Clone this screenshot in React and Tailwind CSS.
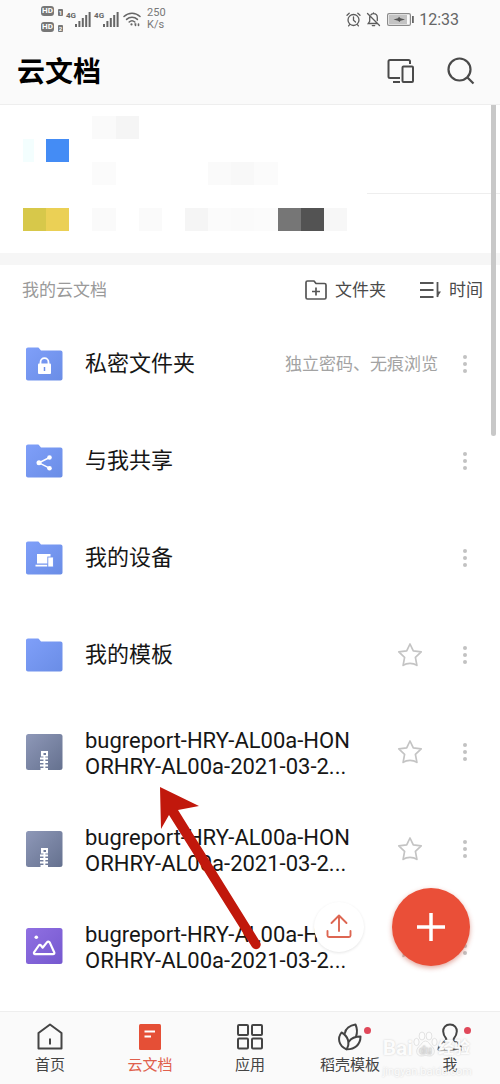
import React from "react";

const mosaic = [
  "col-start-4 row-start-1 bg-[#fafafa]",
  "col-start-5 row-start-1 bg-[#f5f5f5]",
  "col-start-1 row-start-2 bg-[#f3fefe] mr-3",
  "col-start-2 row-start-2 bg-[#448cf5]",
  "col-start-4 row-start-3 bg-[#fbfbfb]",
  "col-start-9 row-start-3 bg-[#fafafa]",
  "col-start-10 row-start-3 bg-[#f8f8f8]",
  "col-start-11 row-start-3 bg-[#fbfbfb]",
  "col-start-1 row-start-5 bg-[#d7c84a]",
  "col-start-2 row-start-5 bg-[#ebd055]",
  "col-start-4 row-start-5 bg-[#fafafa]",
  "col-start-6 row-start-5 bg-[#fafafa]",
  "col-start-8 row-start-5 bg-[#f5f5f5]",
  "col-start-9 row-start-5 bg-[#fbfbfb]",
  "col-start-10 row-start-5 bg-[#fafafa]",
  "col-start-11 row-start-5 bg-[#fbfbfb]",
  "col-start-12 row-start-5 bg-[#767676]",
  "col-start-13 row-start-5 bg-[#535353]",
  "col-start-14 row-start-5 bg-[#f7f7f7]",
];

function Signal() {
  return (
    <div className="flex items-start">
      <span className="text-[8px] leading-[10px] font-bold">4G</span>
      <svg width="16" height="16" viewBox="0 0 16 16" fill="#666" className="-ml-px">
        <rect x="0" y="13" width="2" height="3" />
        <rect x="3.4" y="10" width="2" height="6" />
        <rect x="6.8" y="7" width="2" height="9" />
        <rect x="10.2" y="4" width="2" height="12" />
        <rect x="13.6" y="1" width="2" height="15" />
      </svg>
    </div>
  );
}

function HdBadge({ sim }) {
  return (
    <div className="flex items-end gap-1">
      <span className="flex h-[10px] w-[13px] items-center justify-center rounded-[3px] bg-[#777] text-[8px] font-bold leading-none text-white">
        HD
      </span>
      <span className="flex h-[7px] w-[5px] items-center justify-center rounded-[1px] bg-[#777] text-[6px] font-bold leading-none text-white">
        {sim}
      </span>
    </div>
  );
}

function StatusBar() {
  return (
    <div className="flex h-[38px] items-center justify-between pl-[41px] pr-[41px] text-[#666]">
      <div className="flex items-center">
        <div className="flex w-[25px] flex-col gap-[6px]">
          <HdBadge sim="1" />
          <HdBadge sim="2" />
        </div>
        <div className="flex gap-[3px]">
          <Signal />
          <Signal />
        </div>
        <svg width="18" height="16" viewBox="0 0 18 16" fill="none" stroke="#666" strokeWidth="1.5" strokeLinecap="round" className="ml-1">
          <path d="M1 5.5C5.5 1 12.5 1 17 5.5M3.6 8.4c3-3 7.8-3 10.8 0M6.2 11c1.6-1.5 4-1.5 5.600 0" />
          <circle cx="8.500" cy="13.400" r="1.100" fill="#666" stroke="none" />
          <path d="M12 13h.5v1.500M15.500 13v1.500" strokeWidth="1.600" />
        </svg>
        <div className="ml-[6px] text-[11px] leading-3 text-[#777]">
          250
          <br />
          K/s
        </div>
      </div>
      <div className="flex items-center">
        <svg width="15" height="15" viewBox="0 0 15 15" fill="none" stroke="#5c5c5c" strokeWidth="1.300" strokeLinecap="round">
          <circle cx="7.500" cy="8" r="5.500" />
          <path d="M7.500 5v3.200l2 1.800M1 3.300 3.200 1.200M14 3.300l-2.200-2.100M3.600 12.700l-1 1.200M11.400 12.700l1 1.200" />
        </svg>
        <svg width="15" height="15" viewBox="0 0 15 15" fill="none" stroke="#5c5c5c" strokeWidth="1.300" strokeLinecap="round" className="ml-[5px]">
          <path d="M5 2.800C5.700 2 6.500 1.700 7.500 1.700c2.300 0 3.800 1.600 3.800 3.900v3M3.700 4.700v4.600L2.200 11.500h8.600M7.500 1.700V.8M6.300 13.600h2.400M1.500 1.500l12 12" />
        </svg>
        <svg width="27" height="13" viewBox="0 0 27 13" className="ml-[6px]">
          <rect x=".6" y=".6" width="22.800" height="11.800" rx="1.500" fill="#fafafa" stroke="#8a8a8a" strokeWidth="1.200" />
          <rect x="2" y="2" width="18" height="9" fill="#c3c3c3" />
          <path d="M6.500 6.500 11 5.300 12 3.800l1.500 1.500 4.500 1.200-4.500 1.200L12.500 9 11 7.700z" fill="#555" />
          <rect x="25" y="3" width="1.800" height="7" fill="#666" />
        </svg>
        <span className="ml-[5px] pt-px text-[16px] leading-5">12:33</span>
      </div>
    </div>
  );
}

function Folder({ id, children }) {
  return (
    <svg width="37" height="34" viewBox="0 0 37 34">
      <defs>
        <linearGradient id={id} x1="0" y1="0" x2="1" y2="1">
          <stop offset="0" stopColor="#7f9ff9" />
          <stop offset="1" stopColor="#6a8de6" />
        </linearGradient>
      </defs>
      <path
        d="M2 .5h9.500c1 0 1.500.400 2 1.200L15 3.500h19.500c1.200 0 2 .8 2 2v26c0 1.200-.8 2-2 2H2c-1.200 0-2-.8-2-2v-29c0-1.200.8-2 2-2z"
        fill={"url(#" + id + ")"}
      />
      {children}
    </svg>
  );
}

function ZipIcon({ id }) {
  return (
    <svg width="37" height="36" viewBox="0 0 37 36">
      <defs>
        <linearGradient id={id} x1="0" y1="0" x2="1" y2="1">
          <stop offset="0" stopColor="#8e98b8" />
          <stop offset="1" stopColor="#65718f" />
        </linearGradient>
      </defs>
      <rect width="36.500" height="36" rx="2.500" fill={"url(#" + id + ")"} />
      <path d="M15 17h7v5.500h-7z" fill="#fff" />
      <path d="M17.500 19h2.500v2h-2.500z" fill="#727d9b" />
      <path d="M18.400 22v14M14 24.500h8M14 28h8M14 31.500h8M14.500 35h7.500" stroke="#fff" strokeWidth="1.900" />
    </svg>
  );
}

function ImageIcon() {
  return (
    <svg width="37" height="36" viewBox="0 0 37 36">
      <defs>
        <linearGradient id="imageFill" x1="0" y1="0" x2="1" y2="1">
          <stop offset="0" stopColor="#9070e2" />
          <stop offset="1" stopColor="#7558cf" />
        </linearGradient>
      </defs>
      <rect width="36.500" height="36" rx="2.500" fill="url(#imageFill)" />
      <circle cx="10.300" cy="9.300" r="1.800" fill="#fff" />
      <path
        d="M8.200 24.200 12.800 17.500c.6-.9 1.600-.9 2.200 0l1.600 2.200 4.300-5.300c.9-1.100 2.200-1 2.900.2l4.400 9.600c.5 1.200-.1 2-1.200 2H9.200c-1.200 0-1.700-.9-1-2z"
        fill="none"
        stroke="#fff"
        strokeWidth="2.200"
        strokeLinejoin="round"
      />
    </svg>
  );
}

const rows = [
  {
    name: ["私密文件夹"],
    note: "独立密码、无痕浏览",
    icon: (
      <Folder id="lockFill">
        <path d="M14.500 17v-1.800a4 4 0 0 1 8 0V17" fill="none" stroke="#fff" strokeWidth="1.800" />
        <rect x="12" y="16.500" width="13" height="10.500" rx="1" fill="#fff" />
        <path d="M18.500 20v4" stroke="#6c8fe8" strokeWidth="1.500" />
      </Folder>
    ),
  },
  {
    name: ["与我共享"],
    icon: (
      <Folder id="shareFill">
        <path d="M23.500 13.500 13 18.800l10.500 5.400" fill="none" stroke="#fff" strokeWidth="1.500" />
        <circle cx="23.500" cy="13.500" r="2.300" fill="#fff" />
        <circle cx="13" cy="18.800" r="2.500" fill="#fff" />
        <circle cx="23.500" cy="24.200" r="2.300" fill="#fff" />
      </Folder>
    ),
  },
  {
    name: ["我的设备"],
    icon: (
      <Folder id="deviceFill">
        <path d="M11 13h13.500v9.500H11zM9.500 23.700h12v1.800h-12z" fill="#fff" />
        <rect x="21.800" y="16" width="5.600" height="10" fill="#fff" stroke="#7093ee" strokeWidth=".9" />
      </Folder>
    ),
  },
  { name: ["我的模板"], star: true, icon: <Folder id="plainFill" /> },
  { name: ["bugreport-HRY-AL00a-HON", "ORHRY-AL00a-2021-03-2..."], star: true, icon: <ZipIcon id="zipFillA" /> },
  { name: ["bugreport-HRY-AL00a-HON", "ORHRY-AL00a-2021-03-2..."], star: true, icon: <ZipIcon id="zipFillB" /> },
  { name: ["bugreport-HRY-AL00a-HON", "ORHRY-AL00a-2021-03-2..."], star: true, icon: <ImageIcon /> },
];

function Row({ row }) {
  return (
    <li className="flex h-[97px] items-center pl-[26px] pr-[25px]">
      {row.icon}
      <span
        className={
          row.name.length > 1
            ? "ml-[22px] flex-1 whitespace-nowrap pt-1 text-[22px] leading-[26px] text-[#161616]"
            : "ml-[22px] flex-1 whitespace-nowrap text-[22px] leading-[26px] text-[#161616]"
        }
      >
        {row.name.map((line) => (
          <span key={line} className="block">
            {line}
          </span>
        ))}
      </span>
      {row.note && <span className="mr-[17px] text-[17px] leading-6 text-[#a3a3a3]">{row.note}</span>}
      {row.star && (
        <button type="button" aria-label="收藏" className="mr-8">
          <svg width="26" height="26" viewBox="0 0 26 26" fill="none" stroke="#c4c4c4" strokeWidth="1.700" strokeLinejoin="round">
            <path d="m13 2 3.300 6.900 7.900 1-5.800 5.500 1.500 8C18 22 16 21.300 13 21.300S8 22 6.100 23.400l1.500-8L1.800 9.900l7.900-1z" />
          </svg>
        </button>
      )}
      <button type="button" aria-label="更多" className="flex w-5 justify-center">
        <svg width="6" height="20" viewBox="0 0 6 20" fill="#c2c2c2">
          <circle cx="3" cy="3" r="2" />
          <circle cx="3" cy="10" r="2" />
          <circle cx="3" cy="17" r="2" />
        </svg>
      </button>
    </li>
  );
}

const tabs = [
  {
    label: "首页",
    icon: (
      <g fill="none" stroke="#444" strokeWidth="2" strokeLinejoin="round">
        <path d="M2.500 25.500V10L14 1.500 25.500 10v15.500z" />
        <path d="M14 15.500v6" />
      </g>
    ),
  },
  {
    label: "云文档",
    active: true,
    icon: (
      <g>
        <rect x="3" y="1" width="22" height="26" rx="1.500" fill="#e54f36" />
        <path d="M8.500 8.500h10.500M8.500 13.500h6.500" stroke="#fff" strokeWidth="2" />
      </g>
    ),
  },
  {
    label: "应用",
    icon: (
      <g fill="none" stroke="#444" strokeWidth="2">
        <rect x="2" y="2" width="10" height="10" rx="1" />
        <rect x="16" y="2" width="10" height="10" rx="1" />
        <rect x="2" y="15.500" width="10" height="10" rx="1" />
        <rect x="16" y="15.500" width="10" height="10" rx="1" />
      </g>
    ),
  },
  {
    label: "稻壳模板",
    dot: true,
    icon: (
      <g fill="none" stroke="#444" strokeWidth="2" strokeLinejoin="round" strokeLinecap="round">
        <path d="M9 10C9.500 6 13.500 2.500 19.500 1.500c2 4.500 1.800 8.500.5 12" />
        <path d="M5.500 9.500C1.500 14.500 2 22.500 10.500 26.300 14.500 20 12 13 5.500 9.500z" />
        <path d="M13 18.500C15 15.500 19 13.500 24.500 13.500c0 8-5.500 13-14 12.800" />
      </g>
    ),
  },
  {
    label: "我",
    dot: true,
    icon: (
      <g fill="none" stroke="#444" strokeWidth="2" strokeLinejoin="round">
        <path d="M14 1.500c-4.500 0-7 3.200-6.800 7 .2 2.800 1 4.600 2.500 6.300.9 1.300.8 2.300-.4 3.300C7.800 19.500 2.700 20.500 2.500 26.500h23c-.2-6-5.300-7-6.800-8.400-1.200-1-1.300-2-.4-3.300 1.500-1.700 2.300-3.500 2.500-6.300.2-3.800-2.300-7-6.800-7z" />
      </g>
    ),
  },
];

function Watermark() {
  return (
    <div className="pointer-events-none absolute right-[28px] top-[18px] text-[#fcfcfc] [text-shadow:0_0_2px_#ccc]">
      <div className="flex items-center text-[21px] font-bold leading-8">
        Bai
        <svg width="25" height="28" viewBox="0 0 25 28" fill="#fcfcfc" fillOpacity=".85" stroke="#dcdcdc" strokeWidth=".8" className="mb-2">
          <ellipse cx="3.500" cy="12" rx="2.600" ry="3.600" />
          <ellipse cx="9" cy="6" rx="2.900" ry="4" />
          <ellipse cx="16" cy="6" rx="2.900" ry="4" />
          <ellipse cx="21.500" cy="12" rx="2.600" ry="3.600" />
          <path d="M12.500 11c3 0 3.500 3 6.500 5.500 4 3.500 2.500 9.500-2 9.500-2.500 0-3-.5-4.500-.5s-2 .5-4.500.5c-4.500 0-6-6-2-9.500 3-2.500 3.500-5.500 6.500-5.500z" />
          <text x="12.500" y="24" textAnchor="middle" fontSize="11" fill="#fcfcfc" stroke="#d4d4d4" strokeWidth=".5">du</text>
        </svg>
        <span className="text-[16px]">经验</span>
      </div>
      <div className="text-[11px] leading-3">jingyan.baidu.com</div>
    </div>
  );
}

export default function App() {
  return (
    <div className="flex min-h-screen flex-col bg-white font-['Roboto','Noto_Sans_CJK_SC',sans-serif]">
      <header className="border-b border-[#eeeeee] bg-[#fafafa]">
        <StatusBar />
        <div className="flex h-[66px] items-center pl-[17px] pr-[25px]">
          <h1 className="flex-1 pt-1 text-[28px] font-bold leading-10 text-black">云文档</h1>
          <button type="button" aria-label="设备">
            <svg width="28" height="26" viewBox="0 0 28 26" fill="none" stroke="#4a4a4a" strokeWidth="2" strokeLinejoin="round">
              <path d="M23 6V3.500C23 2.500 22.500 2 21.500 2H3C2 2 1.500 2.500 1.500 3.500v15c0 1 .5 1.500 1.500 1.500h10M6 24h7" />
              <rect x="15.500" y="8.500" width="10.500" height="15.500" rx="1" />
            </svg>
          </button>
          <button type="button" aria-label="搜索" className="ml-8">
            <svg width="28" height="28" viewBox="0 0 28 28" fill="none" stroke="#4a4a4a" strokeWidth="2.200">
              <circle cx="12.500" cy="12.500" r="11" />
              <path d="m20 20 6.500 6.500" />
            </svg>
          </button>
        </div>
      </header>

      <main className="relative flex-1">
        <div className="flex h-[148px] pl-[23px] pt-[11px]">
          <div className="grid w-[324px] grid-cols-14 grid-rows-[repeat(5,23px)]">
            {mosaic.map((cell) => (
              <div key={cell} className={cell} />
            ))}
          </div>
          <div className="ml-5 mt-[77px] flex-1 border-t border-[#eeeeee]" />
        </div>
        <div className="h-3 bg-[#f6f6f6]" />
        <div className="flex h-[50px] items-center pl-[22px] pr-[17px] text-[17px] leading-6 text-[#4a4a4a]">
          <h2 className="flex-1 text-[#9a9a9a]">我的云文档</h2>
          <button type="button" className="flex items-center gap-2">
            <svg width="22" height="20" viewBox="0 0 22 20" fill="none" stroke="#555" strokeWidth="1.700" strokeLinejoin="round">
              <path d="M1 2.500C1 1.500 1.500 1 2.500 1H9l2 2.500h8.500c1 0 1.500.5 1.500 1.500v12.500c0 1-.5 1.500-1.500 1.500h-17C1.500 19 1 18.500 1 17.500zM11 7.500v8M7 11.500h8" />
            </svg>
            文件夹
          </button>
          <button type="button" className="ml-[34px] flex items-center gap-2">
            <svg width="21" height="18" viewBox="0 0 21 18" fill="none" stroke="#555" strokeWidth="1.800">
              <path d="M0 2h13.500M0 9h13.500M0 16h13.500M17.500 1v15" />
              <path d="M17 10.500h4L17 16.500z" fill="#555" stroke="none" />
            </svg>
            时间
          </button>
        </div>
        <ul>
          {rows.map((row, i) => (
            <Row key={i} row={row} />
          ))}
        </ul>

        <div className="absolute right-1 top-0 h-[331px] w-[5px] rounded-b-full bg-[#c8c8c8]" />

        <div className="absolute bottom-[45px] right-[30px] flex items-center gap-7">
          <button type="button" aria-label="上传" className="flex size-[50px] items-center justify-center rounded-full bg-white shadow-[0_1px_3px_rgba(0,0,0,0.10)]">
            <svg width="26" height="26" viewBox="0 0 26 26" fill="none" stroke="#dd6652" strokeWidth="1.900" strokeLinecap="round" strokeLinejoin="round">
              <path d="M13 17V2M5.500 9 13 1.500 20.500 9M1.500 17v4.500c0 1 .5 1.500 1.500 1.500h20c1 0 1.500-.5 1.500-1.500V17" />
            </svg>
          </button>
          <button type="button" aria-label="新建" className="flex size-[78px] items-center justify-center rounded-full bg-[#ea4f38] shadow-[0_2px_5px_rgba(190,60,40,0.45)]">
            <svg width="28" height="28" viewBox="0 0 28 28" stroke="#fff" strokeWidth="3.500">
              <path d="M14 0v28M0 14h28" />
            </svg>
          </button>
        </div>

        <svg width="106" height="168" viewBox="0 0 106 168" className="pointer-events-none absolute left-[158px] top-[680px]">
          <path d="M2 2 41 21 20 25 102 157a4.500 4.500 0 0 1-8 5L11 30 3 44z" fill="#c1180c" />
        </svg>
      </main>

      <nav className="relative grid h-[73px] grid-cols-5 border-t border-[#eeeeee] bg-[#fafafa]">
        {tabs.map((tab) => (
          <a
            key={tab.label}
            href="#"
            className={
              tab.active
                ? "flex flex-col items-center gap-1 pt-[11px] text-[15px] leading-5 text-[#e0604c]"
                : "flex flex-col items-center gap-1 pt-[11px] text-[15px] leading-5 text-[#444444]"
            }
          >
            <span className="relative">
              <svg width="28" height="28" viewBox="0 0 28 28">
                {tab.icon}
              </svg>
              {tab.dot && <span className="absolute -right-[7px] top-1 size-[7px] rounded-full bg-[#e0485a]" />}
            </span>
            {tab.label}
          </a>
        ))}
        <Watermark />
      </nav>
    </div>
  );
}
